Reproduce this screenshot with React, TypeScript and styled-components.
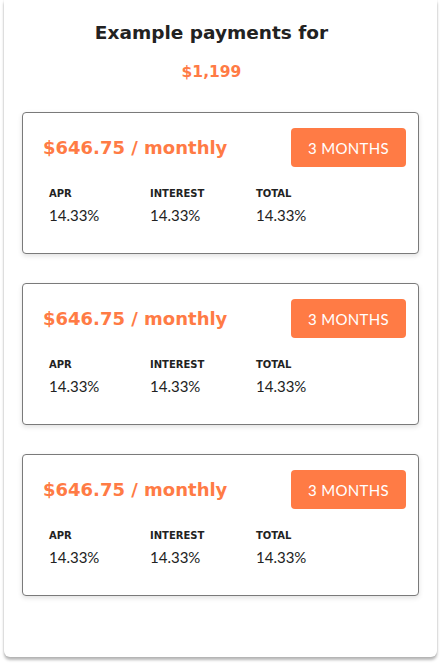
import React from "react";
import styled, { createGlobalStyle } from "styled-components";

const ORANGE = "#ff7b45";

const GlobalStyle = createGlobalStyle`
  html, body {
    margin: 0;
    padding: 0;
    background: #ffffff;
  }
  * {
    box-sizing: border-box;
  }
`;

interface IPlan {
  monthly: string;
  term: string;
  apr: string;
  interest: string;
  total: string;
}

const plans: Array<IPlan> = [
  { monthly: "$646.75", term: "3 MONTHS", apr: "14.33%", interest: "14.33%", total: "14.33%" },
  { monthly: "$646.75", term: "3 MONTHS", apr: "14.33%", interest: "14.33%", total: "14.33%" },
  { monthly: "$646.75", term: "3 MONTHS", apr: "14.33%", interest: "14.33%", total: "14.33%" }
];

const PlanCard = ({ plan }: { plan: IPlan }) => (
  <Card>
    <CardHeader>
      <Price>{plan.monthly} / monthly</Price>
      <TermButton type="button">{plan.term}</TermButton>
    </CardHeader>
    <Stats>
      <Stat width={101}>
        <StatLabel>APR</StatLabel>
        <StatValue>{plan.apr}</StatValue>
      </Stat>
      <Stat width={106}>
        <StatLabel>INTEREST</StatLabel>
        <StatValue>{plan.interest}</StatValue>
      </Stat>
      <Stat width={100}>
        <StatLabel>TOTAL</StatLabel>
        <StatValue>{plan.total}</StatValue>
      </Stat>
    </Stats>
  </Card>
);

const App = () => (
  <>
    <GlobalStyle />
    <Page>
      <Panel>
        <Heading>
          <Title>Example payments for</Title>
          <Amount>$1,199</Amount>
        </Heading>
        <CardList>
          {plans.map((p, i) => (
            <PlanCard key={i.toString()} plan={p} />
          ))}
        </CardList>
      </Panel>
    </Page>
  </>
);

const Page = styled.div`
  width: 441px;
  height: 664px;
  overflow: hidden;
  padding-left: 4px;
`;

const Panel = styled.div`
  width: 433px;
  height: 657px;
  padding: 20px 18px 0 18px;
  background: #ffffff;
  border-radius: 0 0 6px 6px;
  box-shadow: 0 3px 3px rgba(0, 0, 0, 0.28), 0 0 2px rgba(0, 0, 0, 0.12);
  display: flex;
  flex-direction: column;
  font-family: "DejaVu Sans", sans-serif;
`;

const Heading = styled.div`
  display: flex;
  flex-direction: column;
  align-items: center;
  padding-right: 18px;
`;

const Title = styled.h2`
  margin: 0;
  font-size: 18.5px;
  line-height: 26px;
  font-weight: 700;
  color: #222222;
`;

const Amount = styled.div`
  margin-top: 14px;
  font-size: 15.5px;
  line-height: 24px;
  font-weight: 700;
  color: ${ORANGE};
`;

const CardList = styled.div`
  margin-top: 28px;
  width: 100%;
  display: flex;
  flex-direction: column;
  gap: 29px;
`;

const Card = styled.div`
  height: 142px;
  padding: 15px 12px 0 20px;
  border: 1px solid #7a7a7a;
  border-radius: 4px;
  box-shadow: 0 2px 5px rgba(0, 0, 0, 0.12);
  background: #ffffff;
`;

const CardHeader = styled.div`
  display: flex;
  justify-content: space-between;
  align-items: center;
`;

const Price = styled.div`
  font-size: 18px;
  font-weight: 700;
  color: ${ORANGE};
`;

const TermButton = styled.button`
  width: 115px;
  height: 39px;
  border: none;
  border-radius: 4px;
  background: ${ORANGE};
  color: #ffffff;
  font-family: "Lato", sans-serif;
  font-size: 15px;
  font-weight: 400;
  letter-spacing: 0.3px;
  cursor: pointer;
`;

const Stats = styled.div`
  display: flex;
  margin-top: 20px;
  padding-left: 6px;
`;

const Stat = styled.div<{ width: number }>`
  width: ${p => p.width}px;
  display: flex;
  flex-direction: column;
`;

const StatLabel = styled.div`
  font-size: 10px;
  line-height: 14px;
  font-weight: 700;
  color: #222222;
`;

const StatValue = styled.div`
  margin-top: 5px;
  font-family: "Lato", sans-serif;
  font-size: 15px;
  line-height: 18px;
  font-weight: 400;
  color: #222222;
`;

export default App;
